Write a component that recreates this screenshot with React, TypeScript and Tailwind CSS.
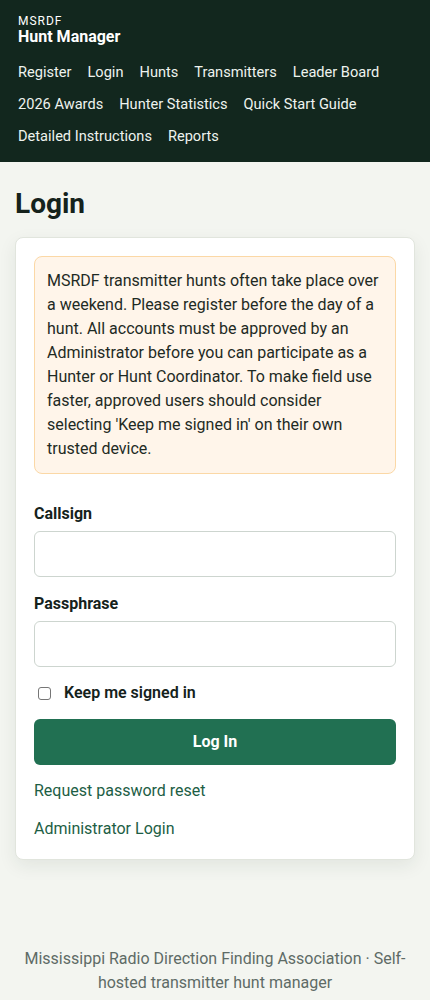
import React from "react";

const font = { fontFamily: "Roboto, 'Noto Sans', sans-serif" };

export default function App() {
  const nav = [
    "Register",
    "Login",
    "Hunts",
    "Transmitters",
    "Leader Board",
    "2026 Awards",
    "Hunter Statistics",
    "Quick Start Guide",
    "Detailed Instructions",
    "Reports",
  ];
  return (
    <div className="min-h-[1000px] bg-[#f3f5f0] flex flex-col" style={font}>
      <header className="bg-[#12271e] text-white px-[18px] pt-[14px] pb-[10px]">
        <div className="text-[12px] leading-[14px] tracking-[1px]">MSRDF</div>
        <div className="text-[16px] leading-[18px] font-bold">Hunt Manager</div>
        <nav className="mt-[10px] flex flex-wrap gap-x-[16px] text-[14.6px] text-[#eef3ee]">
          {nav.map((n) => (
            <a key={n} className="leading-[32px]">{n}</a>
          ))}
        </nav>
      </header>
      <main className="px-[15px] pt-[24px]">
        <h1 className="text-[28px] leading-[36px] font-bold text-[#15221c]">Login</h1>
        <div className="mt-[15px] bg-white border border-[#e1e5dd] rounded-[8px] shadow-[0_6px_18px_rgba(30,50,40,0.08)] p-[18px]">
          <div className="bg-[#fff5ea] border border-[#fbd8a6] rounded-[8px] px-[12px] py-[12px] text-[16px] leading-[24px] text-[#1e2a24]">
            MSRDF transmitter hunts often take place over a weekend. Please register before the day of a hunt. All accounts must be approved by an Administrator before you can participate as a Hunter or Hunt Coordinator. To make field use faster, approved users should consider selecting 'Keep me signed in' on their own trusted device.
          </div>
          <label className="block mt-[28px] text-[16px] leading-[24px] font-bold text-[#15221c]">Callsign</label>
          <input className="mt-[5px] block w-full h-[46px] border border-[#cdd5cf] rounded-[6px] bg-white" />
          <label className="block mt-[15px] text-[16px] leading-[24px] font-bold text-[#15221c]">Passphrase</label>
          <input type="password" className="mt-[5px] block w-full h-[46px] border border-[#cdd5cf] rounded-[6px] bg-white" />
          <div className="mt-[14px] flex items-center gap-[13px] pl-[4px]">
            <span className="w-[13px] h-[13px] border border-[#767676] rounded-[3px] bg-white"></span>
            <span className="text-[16px] leading-[24px] font-semibold text-[#15221c]">Keep me signed in</span>
          </div>
          <button className="mt-[14px] w-full h-[46px] rounded-[6px] bg-[#217052] text-white font-bold text-[16px]">Log In</button>
          <div className="mt-[14px] text-[16px] leading-[24px] text-[#1d5e45]">Request password reset</div>
          <div className="mt-[14px] text-[16px] leading-[24px] text-[#1d5e45]">Administrator Login</div>
        </div>
      </main>
      <footer className="mt-auto pb-[5px] px-[24px] text-center text-[16px] leading-[24px] text-[#5e6b66]">
        Mississippi Radio Direction Finding Association · Self-hosted transmitter hunt manager
      </footer>
    </div>
  );
}
